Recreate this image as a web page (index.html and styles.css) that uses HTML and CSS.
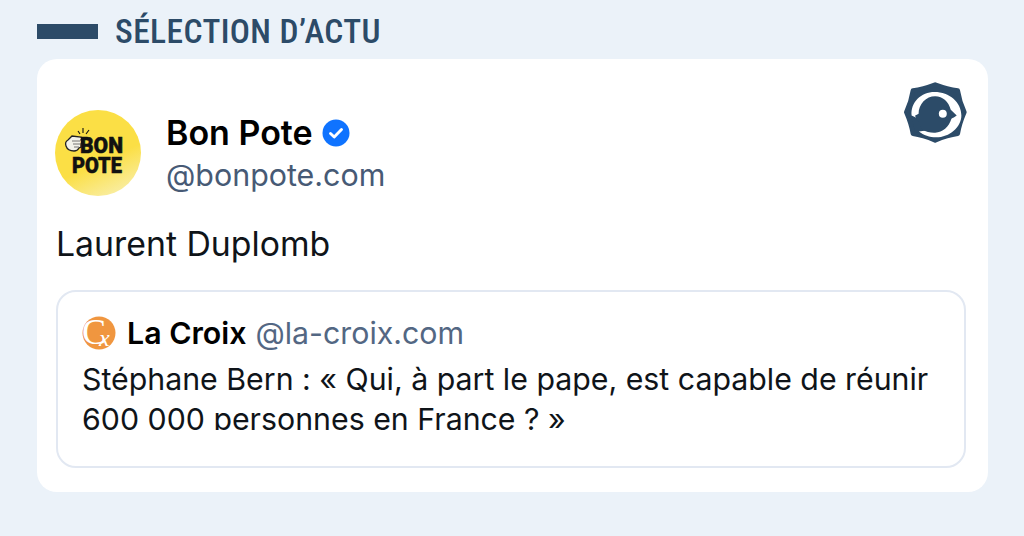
FILE: index.html
```html
<!DOCTYPE html>
<html lang="fr">
<head>
<meta charset="utf-8">
<title>Sélection d'actu</title>
<link rel="stylesheet" href="styles.css">
</head>
<body>
<header class="section-head">
  <span class="section-bar"></span>
  <h2 class="section-title">SÉLECTION D’ACTU</h2>
</header>
<main class="card">
  <div class="author">
    <svg class="avatar" viewBox="0 0 86 86" aria-hidden="true">
      <defs>
        <linearGradient id="ava" x1="0.35" y1="0.2" x2="0.72" y2="1">
          <stop offset="0.5" stop-color="#fbdf45"/>
          <stop offset="1" stop-color="#f9eea6"/>
        </linearGradient>
      </defs>
      <circle cx="43" cy="43" r="43" fill="url(#ava)"/>
      <path d="M11 36c-1-3 0-5 2-6l4-4 9 1c1 1 1 2 0 3l1 2-1 2 0 3-2 1c-1 2-3 3-5 3-4 0-7-2-8-5z" fill="#f1f1ea" stroke="#222" stroke-width="1.300"/>
      <path d="M17 31l8 0M18 34l7 0M19 37l5 0" stroke="#555" stroke-width=".8" fill="none"/>
      <path d="M25 24l-2-3M28 23l0-5M31 24l3-4" stroke="#111" stroke-width="1.100" fill="none"/>
      <text class="ava-text" x="25" y="43" textLength="43" lengthAdjust="spacingAndGlyphs">BON</text>
      <text class="ava-text" x="17" y="63" textLength="50" lengthAdjust="spacingAndGlyphs">POTE</text>
    </svg>
    <div class="author-meta">
      <div class="author-name">Bon Pote
        <svg class="badge" viewBox="0 0 28 28" aria-hidden="true">
          <circle cx="14" cy="14" r="13.500" fill="#0f73ff"/>
          <path d="M8.500 14.500l3.700 3.500 7.300-7.500" fill="none" stroke="#fff" stroke-width="2.900" stroke-linecap="round" stroke-linejoin="round"/>
        </svg>
      </div>
      <div class="author-handle">@bonpote.com</div>
    </div>
  </div>
  <svg class="brand" viewBox="70 62 196 188" aria-hidden="true">
    <path d="M167 72Q205 86 235 90Q240 122 255 155Q240 190 235 220Q205 224 167 240Q130 224 100 220Q95 190 80 155Q95 122 100 90Q130 86 167 72Z" fill="#2c4b68" stroke="#2c4b68" stroke-width="14" stroke-linejoin="round"/>
    <path d="M96 165C92 125 125 94 165 94C210 94 246 125 246 165C246 200 210 231 170 231C150 231 132 224 118 213L180 205Z" fill="#fff"/>
    <path d="M117 160C117 130 140 107 167 107C190 107 208 124 214 148L232 165C226 170 220 172 216 175C208 200 190 216 167 217C155 218 140 214 128 208C122 195 114 180 106 166Z" fill="#2c4b68"/>
    <circle cx="190" cy="160" r="12" fill="#fff"/>
  </svg>
  <p class="post">Laurent Duplomb</p>
  <section class="quote">
    <div class="quote-head">
      <svg class="quote-logo" viewBox="0 0 34 34" aria-hidden="true">
        <circle cx="17" cy="17" r="16.500" fill="#f0963f"/>
        <text class="logo-c" x="0" y="28">C<tspan class="logo-x" dy="2" dx="-7">x</tspan></text>
      </svg>
      <span class="quote-name">La Croix</span>
      <span class="quote-handle">@la-croix.com</span>
    </div>
    <p class="quote-text">Stéphane Bern : « Qui, à part le pape, est capable de réunir<br>600 000 personnes en France ? »</p>
  </section>
</main>
</body>
</html>
```
FILE: styles.css
```css
* { box-sizing: border-box; }
html, body { margin: 0; height: 100%; }
body {
  background: #ebf2f9;
  padding: 0 36px 0 37px;
  font-family: Inter, "Noto Sans", sans-serif;
  font-optical-sizing: none;
  overflow: hidden;
}
.section-head {
  height: 59px;
  display: flex;
  align-items: center;
  gap: 17px;
  padding-top: 4px;
}
.section-bar {
  width: 61px;
  height: 15px;
  margin-top: -1px;
  background: #2c4b68;
}
.section-title {
  margin: 0;
  font-family: "Roboto", sans-serif;
  font-stretch: 85%;
  font-weight: 500;
  font-size: 33.500px;
  letter-spacing: 0.4px;
  line-height: 1;
  color: #2c4b68;
}
.card {
  position: relative;
  width: 951px;
  height: 433px;
  background: #fff;
  border-radius: 20px;
  padding: 51px 18px 0 19px;
}
.author {
  display: flex;
  align-items: center;
  gap: 25px;
  margin-left: -1px;
}
.avatar { width: 86px; height: 86px; flex: none; }
.ava-text {
  font-family: "Roboto", sans-serif;
  font-weight: 900;
  font-size: 22.500px;
  fill: #111;
  stroke: #111;
  stroke-width: 0.5px;
}
.author-meta {
  display: flex;
  flex-direction: column;
  height: 86px;
  padding-top: 1px;
}
.author-name {
  display: flex;
  align-items: center;
  gap: 9px;
  font-weight: 560;
  font-size: 34px;
  line-height: 43px;
  color: #000;
}
.badge { width: 28px; height: 28px; }
.author-handle {
  font-size: 30.400px;
  line-height: 43px;
  color: #475a75;
}
.brand {
  position: absolute;
  top: 22px;
  right: 20px;
  width: 65px;
  height: 63px;
}
.post {
  margin: 26px 0 0;
  font-size: 33.800px;
  line-height: 44px;
  color: #0f1419;
}
.quote {
  width: 910px;
  height: 178px;
  margin-top: 24px;
  border: 2px solid #e2e8f2;
  border-radius: 20px;
  padding: 20px 24px 0;
}
.quote-head {
  display: flex;
  align-items: center;
  gap: 11px;
  height: 42px;
  font-size: 30.300px;
  white-space: nowrap;
}
.quote-logo { width: 34px; height: 34px; flex: none; }
.logo-c { font-family: "Liberation Serif", serif; font-size: 36px; fill: #fff; }
.logo-x { font-size: 24px; font-style: italic; }
.quote-name { font-weight: 600; color: #000; }
.quote-handle { color: #536783; margin-left: -2px; }
.quote-text {
  margin: 5px 0 0;
  height: 71px;
  overflow: hidden;
  font-size: 30.300px;
  line-height: 40px;
  color: #0f1419;
}
```
